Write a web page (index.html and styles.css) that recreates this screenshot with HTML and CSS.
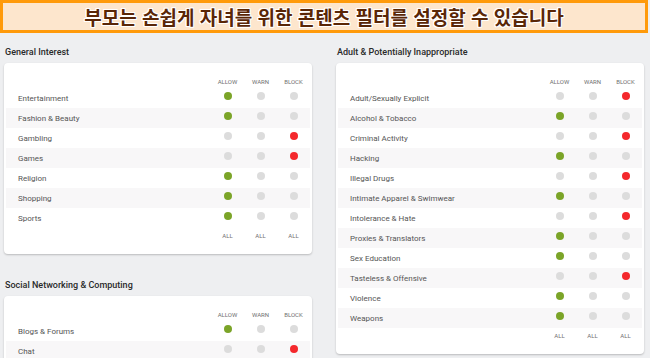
FILE: index.html
```html
<!DOCTYPE html>
<html lang="ko">
<head>
  <meta charset="UTF-8" />
  <meta name="viewport" content="width=device-width, initial-scale=1.0"/>
  <title>Content Filters</title>
  <link rel="stylesheet" href="styles.css">
</head>
<body>
  <header class="banner">
    <h1>부모는 손쉽게 자녀를 위한 콘텐츠 필터를 설정할 수 있습니다</h1>
  </header>

  <div class="columns">
    <div class="column">
      <h2>General Interest</h2>
      <div class="card">
        <div class="row head"><span></span><span>ALLOW</span><span>WARN</span><span>BLOCK</span></div>
        <div class="row"><span class="name">Entertainment</span><i class="dot green"></i><i class="dot"></i><i class="dot"></i></div>
        <div class="row"><span class="name">Fashion &amp; Beauty</span><i class="dot green"></i><i class="dot"></i><i class="dot"></i></div>
        <div class="row"><span class="name">Gambling</span><i class="dot"></i><i class="dot"></i><i class="dot red"></i></div>
        <div class="row"><span class="name">Games</span><i class="dot"></i><i class="dot"></i><i class="dot red"></i></div>
        <div class="row"><span class="name">Religion</span><i class="dot green"></i><i class="dot"></i><i class="dot"></i></div>
        <div class="row"><span class="name">Shopping</span><i class="dot green"></i><i class="dot"></i><i class="dot"></i></div>
        <div class="row"><span class="name">Sports</span><i class="dot green"></i><i class="dot"></i><i class="dot"></i></div>
        <div class="row all"><span></span><span>ALL</span><span>ALL</span><span>ALL</span></div>
      </div>

      <h2 class="second">Social Networking &amp; Computing</h2>
      <div class="card">
        <div class="row head"><span></span><span>ALLOW</span><span>WARN</span><span>BLOCK</span></div>
        <div class="row"><span class="name">Blogs &amp; Forums</span><i class="dot green"></i><i class="dot"></i><i class="dot"></i></div>
        <div class="row"><span class="name">Chat</span><i class="dot"></i><i class="dot"></i><i class="dot red"></i></div>
      </div>
    </div>

    <div class="column">
      <h2>Adult &amp; Potentially Inappropriate</h2>
      <div class="card">
        <div class="row head"><span></span><span>ALLOW</span><span>WARN</span><span>BLOCK</span></div>
        <div class="row"><span class="name">Adult/Sexually Explicit</span><i class="dot"></i><i class="dot"></i><i class="dot red"></i></div>
        <div class="row"><span class="name">Alcohol &amp; Tobacco</span><i class="dot green"></i><i class="dot"></i><i class="dot"></i></div>
        <div class="row"><span class="name">Criminal Activity</span><i class="dot"></i><i class="dot"></i><i class="dot red"></i></div>
        <div class="row"><span class="name">Hacking</span><i class="dot green"></i><i class="dot"></i><i class="dot"></i></div>
        <div class="row"><span class="name">Illegal Drugs</span><i class="dot"></i><i class="dot"></i><i class="dot red"></i></div>
        <div class="row"><span class="name">Intimate Apparel &amp; Swimwear</span><i class="dot green"></i><i class="dot"></i><i class="dot"></i></div>
        <div class="row"><span class="name">Intolerance &amp; Hate</span><i class="dot"></i><i class="dot"></i><i class="dot red"></i></div>
        <div class="row"><span class="name">Proxies &amp; Translators</span><i class="dot green"></i><i class="dot"></i><i class="dot"></i></div>
        <div class="row"><span class="name">Sex Education</span><i class="dot green"></i><i class="dot"></i><i class="dot"></i></div>
        <div class="row"><span class="name">Tasteless &amp; Offensive</span><i class="dot"></i><i class="dot"></i><i class="dot red"></i></div>
        <div class="row"><span class="name">Violence</span><i class="dot green"></i><i class="dot"></i><i class="dot"></i></div>
        <div class="row"><span class="name">Weapons</span><i class="dot green"></i><i class="dot"></i><i class="dot"></i></div>
        <div class="row all"><span></span><span>ALL</span><span>ALL</span><span>ALL</span></div>
      </div>
    </div>
  </div>
</body>
</html>
```

FILE: styles.css
```css
body {
  margin: 0;
  background: #eeeff1;
  font-family: Roboto, "Liberation Sans", sans-serif;
  overflow: hidden;
}

.banner {
  width: 642px;
  height: 27px;
  border: 3px solid #ff9a0a;
  background: #fde6cd;
  display: flex;
  align-items: center;
  justify-content: center;
}

.banner h1 {
  margin: 0;
  font-family: "Noto Sans CJK KR", sans-serif;
  font-size: 19px;
  font-weight: 700;
  line-height: 1;
  color: #5a2606;
  text-shadow: 1px 0 #fff, -1px 0 #fff, 0 1px #fff, 0 -1px #fff,
    1px 1px #fff, -1px -1px #fff, 1px -1px #fff, -1px 1px #fff;
}

.columns {
  display: grid;
  grid-template-columns: 308px 308px;
  gap: 24px;
  padding: 12px 6px 0 4px;
}

h2 {
  margin: 0 0 4px 1px;
  font-size: 9px;
  font-weight: 500;
  line-height: 14px;
  color: #2a2a2a;
}

h2.second {
  margin-top: 24px;
}

.card {
  background: #fff;
  border-radius: 4px;
  box-shadow: 0 1px 2px rgba(0, 0, 0, 0.22);
  padding: 14px 2px 11px 2px;
}

.row {
  display: grid;
  grid-template-columns: 1fr 33px 33px 33px;
  align-items: start;
  height: 20px;
  padding: 0 0 0 12px;
}

.row:nth-child(odd) {
  background: #f8f7f8;
}

.row.head,
.row.all {
  background: none;
  height: 11px;
  font-size: 6px;
  line-height: 10px;
  color: #707070;
  text-align: center;
}

.row.all {
  height: 15px;
  line-height: 15px;
}

.name {
  font-size: 8px;
  line-height: 20px;
  padding-top: 1px;
  color: #555;
}

.dot {
  display: block;
  width: 8px;
  height: 8px;
  margin: 4px auto 0;
  border-radius: 50%;
  background: #dcdcdc;
}

.dot.green {
  background: #7ba428;
}

.dot.red {
  background: #f4282c;
}
```
